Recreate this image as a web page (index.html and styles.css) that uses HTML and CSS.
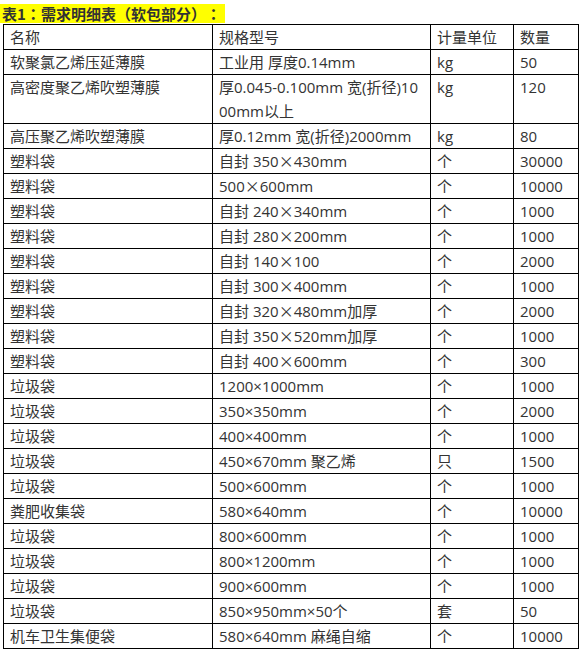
FILE: index.html
```html
<!DOCTYPE html>
<html lang="zh-CN">
<head>
<meta charset="utf-8">
<link rel="stylesheet" href="styles.css">
</head>
<body>
<div class="title-wrap"><span class="title">表1<span class="punct" lang="zh-TW">：</span>需求明细表<span class="punct" lang="zh-TW">（</span>软包部分<span class="punct" lang="zh-TW">）：</span></span></div>
<table class="spec">
  <colgroup>
    <col class="c1"><col class="c2"><col class="c3"><col class="c4">
  </colgroup>
  <tr><td>名称</td><td>规格型号</td><td>计量单位</td><td>数量</td></tr>
  <tr><td>软聚氯乙烯压延薄膜</td><td>工业用 厚度0.14mm</td><td>kg</td><td>50</td></tr>
  <tr><td>高密度聚乙烯吹塑薄膜</td><td>厚0.045-0.100mm 宽(折径)10<br>00mm以上</td><td>kg</td><td>120</td></tr>
  <tr><td>高压聚乙烯吹塑薄膜</td><td>厚0.12mm 宽(折径)2000mm</td><td>kg</td><td>80</td></tr>
  <tr><td>塑料袋</td><td>自封 350<span class="x">×</span>430mm</td><td>个</td><td>30000</td></tr>
  <tr><td>塑料袋</td><td>500<span class="x">×</span>600mm</td><td>个</td><td>10000</td></tr>
  <tr><td>塑料袋</td><td>自封 240<span class="x">×</span>340mm</td><td>个</td><td>1000</td></tr>
  <tr><td>塑料袋</td><td>自封 280<span class="x">×</span>200mm</td><td>个</td><td>1000</td></tr>
  <tr><td>塑料袋</td><td>自封 140<span class="x">×</span>100</td><td>个</td><td>2000</td></tr>
  <tr><td>塑料袋</td><td>自封 300<span class="x">×</span>400mm</td><td>个</td><td>1000</td></tr>
  <tr><td>塑料袋</td><td>自封 320<span class="x">×</span>480mm加厚</td><td>个</td><td>2000</td></tr>
  <tr><td>塑料袋</td><td>自封 350<span class="x">×</span>520mm加厚</td><td>个</td><td>1000</td></tr>
  <tr><td>塑料袋</td><td>自封 400<span class="x">×</span>600mm</td><td>个</td><td>300</td></tr>
  <tr><td>垃圾袋</td><td>1200×1000mm</td><td>个</td><td>1000</td></tr>
  <tr><td>垃圾袋</td><td>350×350mm</td><td>个</td><td>2000</td></tr>
  <tr><td>垃圾袋</td><td>400×400mm</td><td>个</td><td>1000</td></tr>
  <tr><td>垃圾袋</td><td>450×670mm 聚乙烯</td><td>只</td><td>1500</td></tr>
  <tr><td>垃圾袋</td><td>500×600mm</td><td>个</td><td>1000</td></tr>
  <tr><td>粪肥收集袋</td><td>580×640mm</td><td>个</td><td>10000</td></tr>
  <tr><td>垃圾袋</td><td>800×600mm</td><td>个</td><td>1000</td></tr>
  <tr><td>垃圾袋</td><td>800×1200mm</td><td>个</td><td>1000</td></tr>
  <tr><td>垃圾袋</td><td>900×600mm</td><td>个</td><td>1000</td></tr>
  <tr><td>垃圾袋</td><td>850×950mm×50个</td><td>套</td><td>50</td></tr>
  <tr><td>机车卫生集便袋</td><td>580×640mm 麻绳自缩</td><td>个</td><td>10000</td></tr>
</table>
</body>
</html>
```
FILE: styles.css
```css
html, body {
  margin: 0;
  padding: 0;
  background: #fff;
}
body {
  font-family: "Open Sans", "Noto Sans CJK SC", sans-serif;
  color: #333;
}
.title-wrap {
  height: 24px;
  padding-top: 3px;
  box-sizing: border-box;
}
.title {
  display: inline-block;
  background: #ffff00;
  font-family: "Noto Sans CJK SC", sans-serif;
  font-weight: bold;
  font-size: 15px;
  line-height: 19px;
  height: 19px;
  padding: 0 4px 0 2px;
  color: #333;
}
.punct {
  font-family: "Noto Sans CJK TC", sans-serif;
  text-spacing-trim: space-all;
}
.spec {
  margin-left: 3px;
  border-collapse: collapse;
  table-layout: fixed;
  width: 575px;
}
.c1 { width: 209px; }
.c2 { width: 218px; }
.c3 { width: 83px; }
.c4 { width: 65px; }
.spec td {
  border: 1px solid #000;
  padding: 0 6px;
  font-size: 15px;
  line-height: 24px;
  height: 24px;
  vertical-align: top;
  white-space: nowrap;
  overflow: hidden;
}
.x {
  font-family: "Noto Sans CJK SC", sans-serif;
}
```
